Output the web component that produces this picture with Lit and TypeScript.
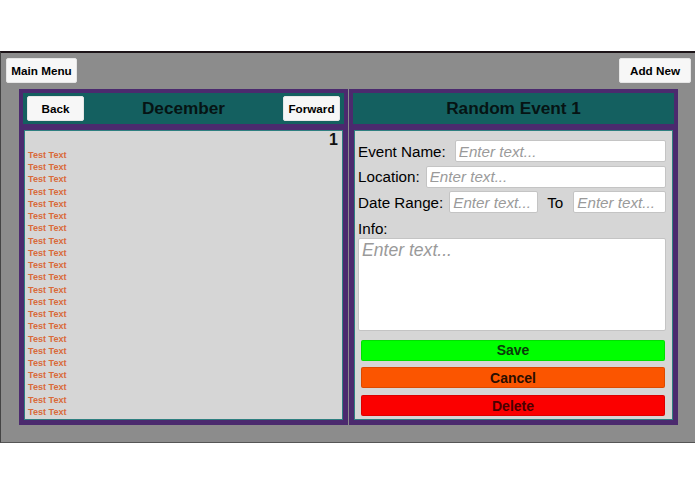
import { LitElement, html, css } from "lit";
import { customElement } from "lit/decorators.js";

@customElement("app-root")
export class AppRoot extends LitElement {
  static styles = css`
    :host {
      display: block;
      width: 695px;
      height: 494px;
      background: #fff;
      font-family: "Liberation Sans", Arial, sans-serif;
      color: #000;
      padding-top: 51px;
      box-sizing: border-box;
      overflow: hidden;
    }
    .stage {
      box-sizing: border-box;
      height: 392px;
      background: #8c8c8c;
      border-top: 2px solid #1c1418;
      border-left: 1px solid #444;
      border-bottom: 1px solid #555;
      display: flex;
      flex-direction: column;
    }
    .topbar {
      display: flex;
      justify-content: space-between;
      padding: 5px 4px 0 5px;
      height: 25px;
    }
    .btn {
      box-sizing: border-box;
      height: 25px;
      background: #f7f7f7;
      border: 1px solid #e6e6e6;
      border-radius: 2px;
      font: bold 11.7px "Liberation Sans", Arial, sans-serif;
      color: #000;
      padding: 0;
      display: flex;
      align-items: center;
      justify-content: center;
    }
    .main { width: 71px; }
    .wide { width: 72px; }
    .narrow { width: 57px; }
    .panels {
      display: flex;
      gap: 1px;
      margin: 6px 0 0 18px;
      height: 336px;
    }
    .panel {
      box-sizing: border-box;
      width: 329px;
      height: 336px;
      background: #4b2a6e;
      padding: 4px 4px 5px;
      display: flex;
      flex-direction: column;
      gap: 6px;
    }
    .head {
      height: 31px;
      flex: none;
      background: #146060;
      display: flex;
      align-items: center;
      justify-content: space-between;
      padding: 0 4px;
      font-size: 17.2px;
      font-weight: bold;
      color: #061414;
    }
    .head.center { justify-content: center; }
    .body {
      flex: 1;
      min-height: 0;
      margin: 0 1px;
      background: #d6d6d6;
      border: 1px solid #2f7f80;
      box-sizing: border-box;
    }
    .list {
      position: relative;
      padding: 18px 0 0 3px;
      font-size: 9.1px;
      font-weight: bold;
      color: #d96a3a;
      line-height: 12.24px;
    }
    .day {
      position: absolute;
      top: 0;
      right: 4px;
      font-size: 16px;
      line-height: 18px;
      color: #111;
    }
    .form {
      padding: 9px 6px 3px 3px;
      display: flex;
      flex-direction: column;
      font-size: 15.2px;
    }
    .row {
      display: flex;
      align-items: center;
      height: 22px;
      margin-bottom: 3.5px;
      gap: 9px;
    }
    .row.loc { gap: 6px; }
    .row label { flex: none; }
    input, textarea {
      box-sizing: border-box;
      background: #fff;
      border: 1px solid #c4c4c4;
      border-radius: 2px;
      padding: 0 3px;
      margin: 0;
      outline: none;
      font-family: "Liberation Sans", Arial, sans-serif;
      font-style: italic;
      font-size: 15.2px;
      min-width: 0;
    }
    input { height: 22px; flex: 1; }
    input.from { flex: none; width: 89px; }
    input::placeholder, textarea::placeholder { color: #9a9a9a; opacity: 1; }
    .date { gap: 6px; }
    .date .to { margin: 0 4px 0 3px; }
    .info { line-height: 18px; margin-top: 3px; height: 18px; }
    textarea {
      display: block;
      width: 100%;
      height: 93.5px;
      resize: none;
      font-size: 17.6px;
      padding: 1px 3px;
    }
    .actions {
      display: flex;
      flex-direction: column;
      gap: 6.7px;
      margin: 9px 1px 0 3px;
    }
    .act {
      box-sizing: border-box;
      height: 21px;
      width: 100%;
      border: 1px solid rgba(0, 0, 0, 0.12);
      border-radius: 2px;
      font: bold 14px "Liberation Sans", Arial, sans-serif;
      padding: 0;
      color: #000;
    }
    .save { background: #00ff00; color: #0a3a0a; }
    .cancel { background: #fb5500; color: #2a0e00; }
    .delete { background: #fb0000; color: #4a0000; }
  `;

  render() {
    const rows = Array.from({ length: 22 });
    return html`
      <div class="stage">
        <div class="topbar">
          <button class="btn main">Main Menu</button>
          <button class="btn wide">Add New</button>
        </div>
        <div class="panels">
          <section class="panel">
            <div class="head">
              <button class="btn narrow">Back</button>
              <span>December</span>
              <button class="btn narrow">Forward</button>
            </div>
            <div class="body list">
              <span class="day">1</span>
              ${rows.map(() => html`<div>Test Text</div>`)}
            </div>
          </section>
          <section class="panel">
            <div class="head center">Random Event 1</div>
            <div class="body form">
              <div class="row">
                <label>Event Name:</label>
                <input placeholder="Enter text..." />
              </div>
              <div class="row loc">
                <label>Location:</label>
                <input placeholder="Enter text..." />
              </div>
              <div class="row date">
                <label>Date Range:</label>
                <input class="from" placeholder="Enter text..." />
                <span class="to">To</span>
                <input placeholder="Enter text..." />
              </div>
              <label class="info">Info:</label>
              <textarea placeholder="Enter text..."></textarea>
              <div class="actions">
                <button class="act save">Save</button>
                <button class="act cancel">Cancel</button>
                <button class="act delete">Delete</button>
              </div>
            </div>
          </section>
        </div>
      </div>
    `;
  }
}
